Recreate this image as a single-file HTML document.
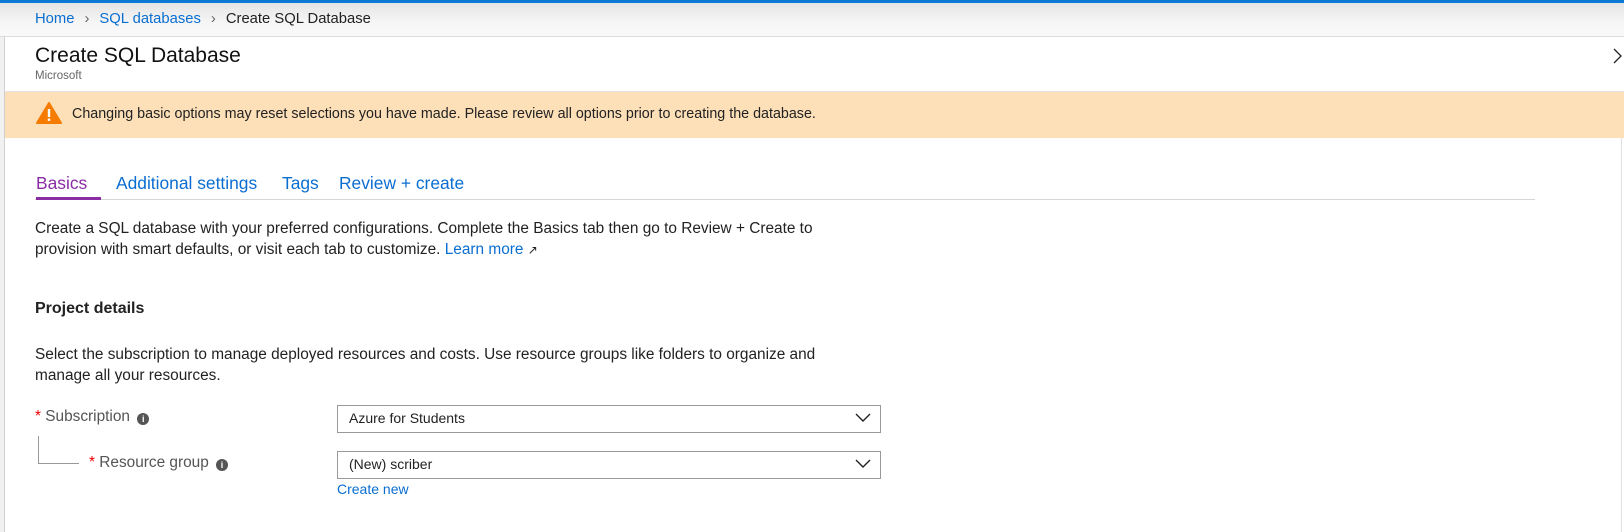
<!DOCTYPE html>
<html><head><meta charset="utf-8"><style>
*{margin:0;padding:0;box-sizing:border-box}
body{width:1624px;height:532px;overflow:hidden;background:#fff;font-family:"Liberation Sans",sans-serif;color:#323130;position:relative}
.a{position:absolute;white-space:nowrap}
.blue{color:#0a6ed1}
</style></head><body>
<div class="a" style="left:0;top:0;width:1624px;height:3px;background:#0a78d4"></div>
<div class="a" style="left:0;top:3px;width:1624px;height:33px;background:linear-gradient(#e4e4e4,#f6f6f6 60%,#f9f9f9)"></div>
<div class="a" style="left:0;top:36px;width:1624px;height:1px;background:#dcdcdc"></div>
<div class="a" style="left:0;top:37px;width:4px;height:495px;background:#f1f1f1"></div>
<div class="a" style="left:4px;top:37px;width:1px;height:495px;background:#d0d0d0"></div>
<div class="a" style="left:1621px;top:138px;width:1px;height:394px;background:#e0e0e0"></div>
<div class="a" style="left:35px;top:11px;font-size:14.8px"><span class="blue">Home</span><span style="color:#666;margin:0 10px">&#x203A;</span><span class="blue">SQL databases</span><span style="color:#666;margin:0 10px">&#x203A;</span><span style="color:#222">Create SQL Database</span></div>
<div class="a" style="left:35px;top:44px;font-size:21px;color:#111">Create SQL Database</div>
<div class="a" style="left:35px;top:70px;font-size:11.5px;color:#666">Microsoft</div>
<svg class="a" style="left:1612px;top:47px" width="12" height="18"><path d="M2 2 L9 9 L2 16" fill="none" stroke="#222" stroke-width="1.3"/></svg>
<div class="a" style="left:5px;top:91px;width:1619px;height:1px;background:#e2e2e2"></div>
<div class="a" style="left:5px;top:92px;width:1619px;height:46px;background:#fddfb8"></div>
<svg class="a" style="left:36px;top:102px" width="26" height="22"><path d="M13 1 L25 21 L1 21 Z" fill="#f57c00" stroke="#f57c00" stroke-linejoin="round" stroke-width="2"/><rect x="11.8" y="7" width="2.4" height="8" fill="#fff"/><rect x="11.8" y="16.5" width="2.4" height="2.4" fill="#fff"/></svg>
<div class="a" style="left:72px;top:106px;font-size:14.3px;color:#222">Changing basic options may reset selections you have made. Please review all options prior to creating the database.</div>
<div class="a" style="left:36px;top:173px;font-size:17.4px;color:#8a2da5">Basics</div>
<div class="a" style="left:116px;top:173px;font-size:17.4px"><span class="blue">Additional settings</span></div>
<div class="a" style="left:282px;top:173px;font-size:17.4px"><span class="blue">Tags</span></div>
<div class="a" style="left:339px;top:173px;font-size:17.4px"><span class="blue">Review + create</span></div>
<div class="a" style="left:35px;top:199px;width:1500px;height:1px;background:#d6d6d6"></div>
<div class="a" style="left:36px;top:197px;width:65px;height:3px;background:#8a2da5"></div>
<div class="a" style="left:35px;top:218px;font-size:15.4px;line-height:21px;color:#222">Create a SQL database with your preferred configurations. Complete the Basics tab then go to Review + Create to<br>provision with smart defaults, or visit each tab to customize. <span class="blue">Learn more</span> <span style="font-size:12px">&#x2197;</span></div>
<div class="a" style="left:35px;top:300px;font-size:16px;font-weight:bold;color:#222">Project details</div>
<div class="a" style="left:35px;top:344px;font-size:15.4px;line-height:21px;color:#222">Select the subscription to manage deployed resources and costs. Use resource groups like folders to organize and<br>manage all your resources.</div>
<div class="a" style="left:35px;top:408px;font-size:15.4px;color:#555"><span style="color:#e00">*</span> Subscription <span style="display:inline-block;width:12px;height:12px;border-radius:6px;background:#555;color:#fff;font-size:9px;text-align:center;line-height:12px;font-weight:bold;vertical-align:-1px;margin-left:3px">i</span></div>
<div class="a" style="left:38px;top:436px;width:1px;height:27px;background:#999"></div>
<div class="a" style="left:38px;top:463px;width:41px;height:1px;background:#999"></div>
<div class="a" style="left:89px;top:454px;font-size:15.4px;color:#555"><span style="color:#e00">*</span> Resource group <span style="display:inline-block;width:12px;height:12px;border-radius:6px;background:#555;color:#fff;font-size:9px;text-align:center;line-height:12px;font-weight:bold;vertical-align:-1px;margin-left:3px">i</span></div>
<div class="a" style="left:337px;top:405px;width:544px;height:28px;border:1px solid #999"></div>
<div class="a" style="left:349px;top:410px;font-size:14px;color:#222">Azure for Students</div>
<svg class="a" style="left:855px;top:413px" width="16" height="10"><path d="M1 1 L8 8 L15 1" fill="none" stroke="#222" stroke-width="1.4"/></svg>
<div class="a" style="left:337px;top:451px;width:544px;height:28px;border:1px solid #999"></div>
<div class="a" style="left:349px;top:456px;font-size:14px;color:#222">(New) scriber</div>
<svg class="a" style="left:855px;top:459px" width="16" height="10"><path d="M1 1 L8 8 L15 1" fill="none" stroke="#222" stroke-width="1.4"/></svg>
<div class="a blue" style="left:337px;top:481px;font-size:14px">Create new</div>
</body></html>
